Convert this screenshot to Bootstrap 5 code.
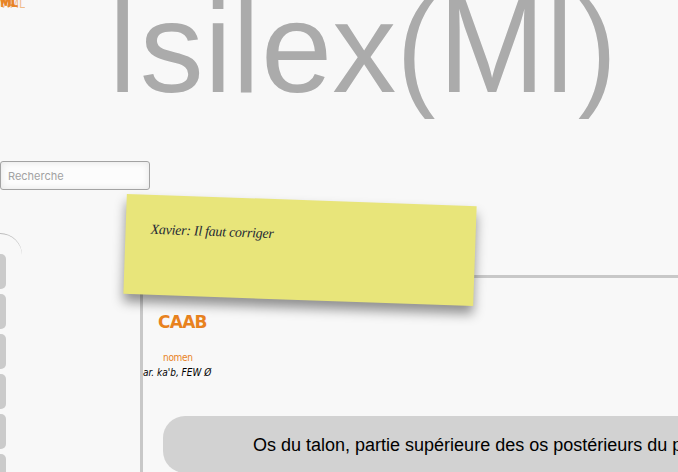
<!DOCTYPE html>
<html lang="fr">
<head>
<meta charset="utf-8">
<meta name="viewport" content="width=device-width, initial-scale=1">
<title>Isilex(MI)</title>
<link rel="stylesheet" href="https://cdn.jsdelivr.net/npm/bootstrap@5.3.0/dist/css/bootstrap.min.css">
<style>
body{background:#f8f8f8;height:472px;font-family:"Liberation Sans",sans-serif;color:#000}
.site-head{height:161px}
.site-title{font-size:128px;line-height:144px;margin:-24px 0 0 105px;color:#ababab;font-weight:400;letter-spacing:-.9px}
.site-title span{display:inline-block;transform-origin:50% 116px}
.site-title .cap{transform:scale(.88,1.07)}
.site-title .wide{transform:scale(1,1.07);margin-left:1.5px}
.site-title .asc{transform:scale(.94,1.02);margin-left:1px}
.site-title .low{margin-left:1px}
.site-title .brace{transform:scaleX(.9)}
.site-title .wide + .cap{margin-left:-2px}
.site-title .cap + .brace{margin-left:-1px}
.corner-links{left:0;top:-4px;width:30px;height:15px;color:#e8821e;font:bold 12px/16px "DejaVu Sans Condensed","DejaVu Sans",sans-serif}
.corner-links span{position:absolute;top:-1px;right:12px;opacity:.75}
.corner-links span:nth-child(3){right:15px;top:-2px}
.corner-links span:last-child{right:5px;top:0;opacity:.5;font-weight:400}
.search-box{width:150px;height:29px;border:1px solid #a3a3a3;border-radius:3px;padding:0 7px;font:11px "Inter",sans-serif;background:#fcfcfc;box-shadow:inset 0 0 7px #e4e4e4}
.search-box::placeholder{color:#a2a2a2;opacity:1}
.side{width:140px;margin-top:43px}
.side-panel{width:22px;height:300px;border-top:1px solid #bcbcbc;border-right:0 solid transparent;border-top-right-radius:22px;padding-top:20px}
.side-tab{width:6px;height:35px;background:#cbcbcb;border-radius:0 5px 5px 0;margin-bottom:5px}
.entry{margin-top:85px;height:400px;width:900px;border:3px solid #c8c8c8}
.lemma{font:bold 17px/22px "DejaVu Sans",sans-serif;color:#e8821e;margin:33px 0 0 15px;letter-spacing:-.75px}
.gram{font:10px/15px "DejaVu Sans Condensed","DejaVu Sans",sans-serif;color:#e8821e;margin:17px 0 0 20px;letter-spacing:-.3px}
.etym{font:italic 10px/15px "DejaVu Sans Condensed","DejaVu Sans",sans-serif;letter-spacing:0}
.sense{margin:36px 0 0 20px;height:57px;background:#d2d2d2;border-radius:22px;padding:2px 0 0 90px;font-size:18px;width:800px}
.note{left:125px;top:200px;width:350px;height:100px;background:#e8e57a;transform:rotate(2deg);box-shadow:0 8px 12px rgba(0,0,0,.42);padding:25px 0 0 25px;font:italic 14px/20px "Apple Chancery","Z003","Liberation Serif",serif;letter-spacing:-.27px;color:#252a35}
</style>
<script src="https://cdn.jsdelivr.net/npm/bootstrap@5.3.0/dist/js/bootstrap.bundle.min.js"></script>
</head>
<body class="position-relative overflow-hidden">
<header class="site-head overflow-hidden"><h1 class="site-title text-nowrap"><span class="cap">I</span><span>s</span><span class="asc">i</span><span class="asc">l</span><span class="low">e</span><span class="low">x</span><span class="brace">(</span><span class="wide">M</span><span class="cap">I</span><span class="brace">)</span></h1></header>
<div class="corner-links position-absolute overflow-hidden"><span>XML</span><span>HTML</span><span>XML</span><span>XML</span></div>
<form class="d-flex"><input class="search-box" type="text" placeholder="Recherche" aria-label="Recherche"></form>
<div class="d-flex">
<aside class="side flex-shrink-0"><div class="side-panel d-flex flex-column">
<div class="side-tab"></div><div class="side-tab"></div><div class="side-tab"></div><div class="side-tab"></div><div class="side-tab"></div><div class="side-tab"></div>
</div></aside>
<main class="entry flex-shrink-0">
<h2 class="lemma">CAAB</h2>
<div class="gram">nomen</div>
<div class="etym">ar. ka'b, FEW Ø</div>
<div class="sense d-flex align-items-center text-nowrap">Os du talon, partie supérieure des os postérieurs du pied</div>
</main>
</div>
<div class="note position-absolute">Xavier: Il faut corriger</div>
</body>
</html>
